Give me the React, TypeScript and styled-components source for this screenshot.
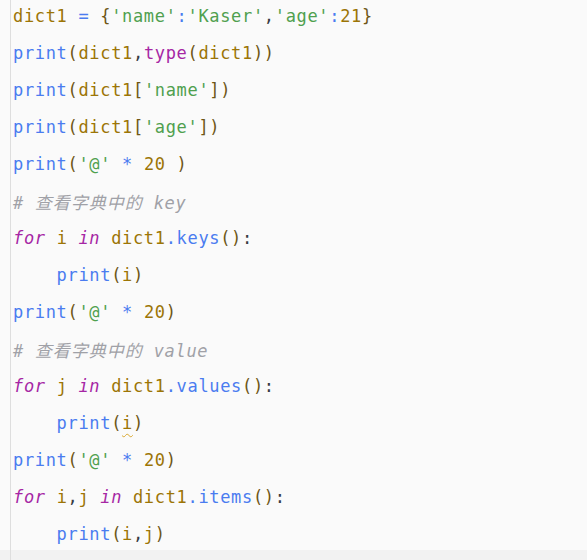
import React from "react";
import styled, { createGlobalStyle, css } from "styled-components";

const Global = createGlobalStyle`
  html, body { margin: 0; padding: 0; background: #fafafa; }
  #root { width: 587px; height: 560px; }
`;

type Kind =
  | "var"
  | "fn"
  | "builtin"
  | "kw"
  | "str"
  | "num"
  | "op"
  | "br"
  | "punc"
  | "cmt"
  | "cjk"
  | "sp"
  | "warn";

const colors: Record<Kind, string> = {
  var: "#9c7506",
  fn: "#4a7cf0",
  builtin: "#a626a4",
  kw: "#a626a4",
  str: "#4fa04e",
  num: "#9c7506",
  op: "#4a7cf0",
  br: "#6e5616",
  punc: "#383a42",
  cmt: "#a0a1a7",
  cjk: "#a0a1a7",
  sp: "inherit",
  warn: "#9c7506",
};

const Page = styled.div`
  display: flex;
  flex-direction: column;
  width: 587px;
  height: 560px;
  background: #fafafa;
  overflow: hidden;
`;

const Body = styled.div`
  flex: 1;
  min-height: 0;
  margin-left: 10px;
  border-left: 1px solid #dedede;
  padding-left: 2px;
  overflow: hidden;
`;

const Code = styled.pre`
  margin: -2px 0 0 0;
  font-family: "DejaVu Sans Mono", "Liberation Mono", monospace;
  font-size: 17px;
  letter-spacing: 0.67px;
  line-height: 37px;
  color: #383a42;
`;

const Line = styled.div<{ $indent?: number }>`
  height: 37px;
  white-space: pre;
  padding-left: ${(p) => (p.$indent ?? 0) * 10.9}px;
`;

const Token = styled.span<{ $kind: Kind }>`
  color: ${(p) => colors[p.$kind]};
  ${(p) =>
    (p.$kind === "kw" || p.$kind === "cmt") &&
    css`
      font-style: italic;
    `}
  ${(p) =>
    p.$kind === "cjk" &&
    css`
      font-family: "Noto Sans CJK SC", sans-serif;
      font-style: italic;
      letter-spacing: 1px;
    `}
  ${(p) =>
    p.$kind === "warn" &&
    css`
      text-decoration: underline wavy #d9a830;
      text-decoration-thickness: 1px;
      text-underline-offset: 4px;
    `}
`;

const Footer = styled.div`
  height: 10px;
  flex: none;
  background: #f2f2f2;
  padding-left: 10px;
  display: flex;
`;

const Rail = styled.div`
  width: 0;
  border-left: 1px solid #dedede;
`;

type Tok = [Kind, string];
type L = { indent?: number; toks: Tok[] };

const lines: L[] = [
  {
    toks: [
      ["var", "dict1"],
      ["sp", " "],
      ["op", "="],
      ["sp", " "],
      ["br", "{"],
      ["str", "'name'"],
      ["op", ":"],
      ["str", "'Kaser'"],
      ["punc", ","],
      ["str", "'age'"],
      ["op", ":"],
      ["num", "21"],
      ["br", "}"],
    ],
  },
  {
    toks: [
      ["fn", "print"],
      ["br", "("],
      ["var", "dict1"],
      ["punc", ","],
      ["builtin", "type"],
      ["br", "("],
      ["var", "dict1"],
      ["br", "))"],
    ],
  },
  {
    toks: [
      ["fn", "print"],
      ["br", "("],
      ["var", "dict1"],
      ["br", "["],
      ["str", "'name'"],
      ["br", "])"],
    ],
  },
  {
    toks: [
      ["fn", "print"],
      ["br", "("],
      ["var", "dict1"],
      ["br", "["],
      ["str", "'age'"],
      ["br", "])"],
    ],
  },
  {
    toks: [
      ["fn", "print"],
      ["br", "("],
      ["str", "'@'"],
      ["sp", " "],
      ["op", "*"],
      ["sp", " "],
      ["num", "20"],
      ["sp", " "],
      ["br", ")"],
    ],
  },
  {
    toks: [
      ["cmt", "# "],
      ["cjk", "查看字典中的"],
      ["cmt", " key"],
    ],
  },
  {
    toks: [
      ["kw", "for"],
      ["sp", " "],
      ["var", "i"],
      ["sp", " "],
      ["kw", "in"],
      ["sp", " "],
      ["var", "dict1"],
      ["fn", ".keys"],
      ["br", "()"],
      ["punc", ":"],
    ],
  },
  {
    indent: 4,
    toks: [
      ["fn", "print"],
      ["br", "("],
      ["var", "i"],
      ["br", ")"],
    ],
  },
  {
    toks: [
      ["fn", "print"],
      ["br", "("],
      ["str", "'@'"],
      ["sp", " "],
      ["op", "*"],
      ["sp", " "],
      ["num", "20"],
      ["br", ")"],
    ],
  },
  {
    toks: [
      ["cmt", "# "],
      ["cjk", "查看字典中的"],
      ["cmt", " value"],
    ],
  },
  {
    toks: [
      ["kw", "for"],
      ["sp", " "],
      ["var", "j"],
      ["sp", " "],
      ["kw", "in"],
      ["sp", " "],
      ["var", "dict1"],
      ["fn", ".values"],
      ["br", "()"],
      ["punc", ":"],
    ],
  },
  {
    indent: 4,
    toks: [
      ["fn", "print"],
      ["br", "("],
      ["warn", "i"],
      ["br", ")"],
    ],
  },
  {
    toks: [
      ["fn", "print"],
      ["br", "("],
      ["str", "'@'"],
      ["sp", " "],
      ["op", "*"],
      ["sp", " "],
      ["num", "20"],
      ["br", ")"],
    ],
  },
  {
    toks: [
      ["kw", "for"],
      ["sp", " "],
      ["var", "i"],
      ["punc", ","],
      ["var", "j"],
      ["sp", " "],
      ["kw", "in"],
      ["sp", " "],
      ["var", "dict1"],
      ["fn", ".items"],
      ["br", "()"],
      ["punc", ":"],
    ],
  },
  {
    indent: 4,
    toks: [
      ["fn", "print"],
      ["br", "("],
      ["var", "i"],
      ["punc", ","],
      ["var", "j"],
      ["br", ")"],
    ],
  },
];

export default function App() {
  return (
    <>
      <Global />
      <Page>
        <Body>
          <Code>
            {lines.map((l, i) => (
              <Line key={i} $indent={l.indent}>
                {l.toks.map(([k, t], j) => (
                  <Token key={j} $kind={k}>
                    {t}
                  </Token>
                ))}
              </Line>
            ))}
          </Code>
        </Body>
        <Footer>
          <Rail />
        </Footer>
      </Page>
    </>
  );
}
